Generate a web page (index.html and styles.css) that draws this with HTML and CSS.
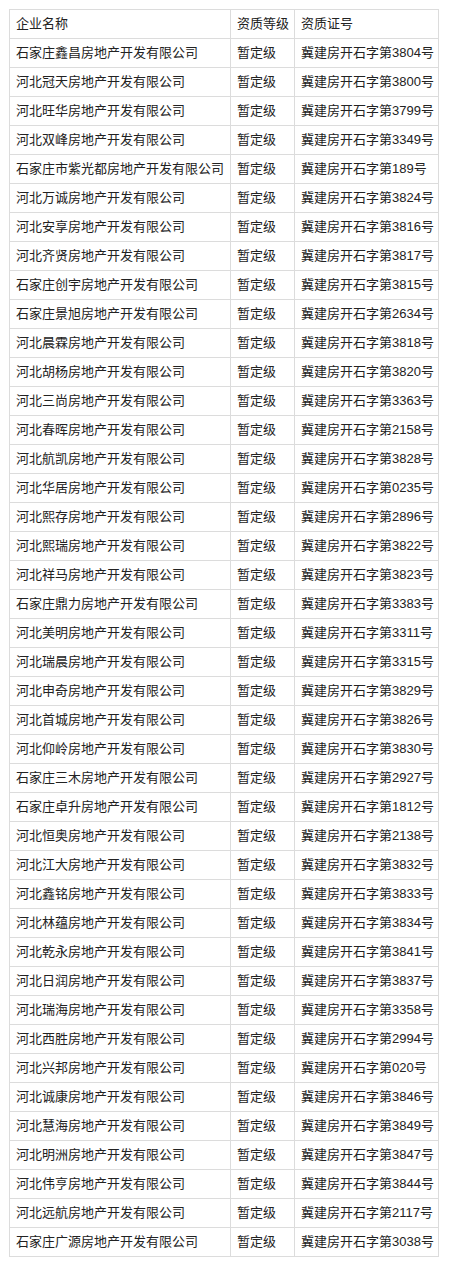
FILE: index.html
```html
<!DOCTYPE html>
<html lang="zh">
<head>
<meta charset="utf-8">
<link rel="stylesheet" href="styles.css">
</head>
<body>
<div class="wrap">
<table class="list">
<colgroup><col class="c1"><col class="c2"><col class="c3"></colgroup>
<tbody>
<tr><td>企业名称</td><td>资质等级</td><td>资质证号</td></tr>
<tr><td>石家庄鑫昌房地产开发有限公司</td><td>暂定级</td><td>冀建房开石字第3804号</td></tr>
<tr><td>河北冠天房地产开发有限公司</td><td>暂定级</td><td>冀建房开石字第3800号</td></tr>
<tr><td>河北旺华房地产开发有限公司</td><td>暂定级</td><td>冀建房开石字第3799号</td></tr>
<tr><td>河北双峰房地产开发有限公司</td><td>暂定级</td><td>冀建房开石字第3349号</td></tr>
<tr><td>石家庄市紫光都房地产开发有限公司</td><td>暂定级</td><td>冀建房开石字第189号</td></tr>
<tr><td>河北万诚房地产开发有限公司</td><td>暂定级</td><td>冀建房开石字第3824号</td></tr>
<tr><td>河北安享房地产开发有限公司</td><td>暂定级</td><td>冀建房开石字第3816号</td></tr>
<tr><td>河北齐贤房地产开发有限公司</td><td>暂定级</td><td>冀建房开石字第3817号</td></tr>
<tr><td>石家庄创宇房地产开发有限公司</td><td>暂定级</td><td>冀建房开石字第3815号</td></tr>
<tr><td>石家庄景旭房地产开发有限公司</td><td>暂定级</td><td>冀建房开石字第2634号</td></tr>
<tr><td>河北晨霖房地产开发有限公司</td><td>暂定级</td><td>冀建房开石字第3818号</td></tr>
<tr><td>河北胡杨房地产开发有限公司</td><td>暂定级</td><td>冀建房开石字第3820号</td></tr>
<tr><td>河北三尚房地产开发有限公司</td><td>暂定级</td><td>冀建房开石字第3363号</td></tr>
<tr><td>河北春晖房地产开发有限公司</td><td>暂定级</td><td>冀建房开石字第2158号</td></tr>
<tr><td>河北航凯房地产开发有限公司</td><td>暂定级</td><td>冀建房开石字第3828号</td></tr>
<tr><td>河北华居房地产开发有限公司</td><td>暂定级</td><td>冀建房开石字第0235号</td></tr>
<tr><td>河北熙存房地产开发有限公司</td><td>暂定级</td><td>冀建房开石字第2896号</td></tr>
<tr><td>河北熙瑞房地产开发有限公司</td><td>暂定级</td><td>冀建房开石字第3822号</td></tr>
<tr><td>河北祥马房地产开发有限公司</td><td>暂定级</td><td>冀建房开石字第3823号</td></tr>
<tr><td>石家庄鼎力房地产开发有限公司</td><td>暂定级</td><td>冀建房开石字第3383号</td></tr>
<tr><td>河北美明房地产开发有限公司</td><td>暂定级</td><td>冀建房开石字第3311号</td></tr>
<tr><td>河北瑞晨房地产开发有限公司</td><td>暂定级</td><td>冀建房开石字第3315号</td></tr>
<tr><td>河北申奇房地产开发有限公司</td><td>暂定级</td><td>冀建房开石字第3829号</td></tr>
<tr><td>河北首城房地产开发有限公司</td><td>暂定级</td><td>冀建房开石字第3826号</td></tr>
<tr><td>河北仰岭房地产开发有限公司</td><td>暂定级</td><td>冀建房开石字第3830号</td></tr>
<tr><td>石家庄三木房地产开发有限公司</td><td>暂定级</td><td>冀建房开石字第2927号</td></tr>
<tr><td>石家庄卓升房地产开发有限公司</td><td>暂定级</td><td>冀建房开石字第1812号</td></tr>
<tr><td>河北恒奥房地产开发有限公司</td><td>暂定级</td><td>冀建房开石字第2138号</td></tr>
<tr><td>河北江大房地产开发有限公司</td><td>暂定级</td><td>冀建房开石字第3832号</td></tr>
<tr><td>河北鑫铭房地产开发有限公司</td><td>暂定级</td><td>冀建房开石字第3833号</td></tr>
<tr><td>河北林蕴房地产开发有限公司</td><td>暂定级</td><td>冀建房开石字第3834号</td></tr>
<tr><td>河北乾永房地产开发有限公司</td><td>暂定级</td><td>冀建房开石字第3841号</td></tr>
<tr><td>河北日润房地产开发有限公司</td><td>暂定级</td><td>冀建房开石字第3837号</td></tr>
<tr><td>河北瑞海房地产开发有限公司</td><td>暂定级</td><td>冀建房开石字第3358号</td></tr>
<tr><td>河北西胜房地产开发有限公司</td><td>暂定级</td><td>冀建房开石字第2994号</td></tr>
<tr><td>河北兴邦房地产开发有限公司</td><td>暂定级</td><td>冀建房开石字第020号</td></tr>
<tr><td>河北诚康房地产开发有限公司</td><td>暂定级</td><td>冀建房开石字第3846号</td></tr>
<tr><td>河北慧海房地产开发有限公司</td><td>暂定级</td><td>冀建房开石字第3849号</td></tr>
<tr><td>河北明洲房地产开发有限公司</td><td>暂定级</td><td>冀建房开石字第3847号</td></tr>
<tr><td>河北伟亨房地产开发有限公司</td><td>暂定级</td><td>冀建房开石字第3844号</td></tr>
<tr><td>河北远航房地产开发有限公司</td><td>暂定级</td><td>冀建房开石字第2117号</td></tr>
<tr><td>石家庄广源房地产开发有限公司</td><td>暂定级</td><td>冀建房开石字第3038号</td></tr>
</tbody>
</table>
</div>
</body>
</html>
```
FILE: styles.css
```css
html, body {
  margin: 0;
  padding: 0;
  background: #ffffff;
}
.wrap {
  padding: 9px 0 0 9px;
}
.list {
  border-collapse: collapse;
  table-layout: fixed;
  width: 429px;
  font-family: "Liberation Sans", "Noto Sans CJK SC", sans-serif;
  font-size: 13px;
  color: #222222;
}
.c1 { width: 221px; }
.c2 { width: 64px; }
.c3 { width: 144px; }
.list tr {
  height: 29px;
}
.list td {
  border: 1px solid #dcdcdc;
  padding: 0 0 0 6px;
  white-space: nowrap;
  overflow: hidden;
  vertical-align: middle;
  line-height: 16px;
}
```
